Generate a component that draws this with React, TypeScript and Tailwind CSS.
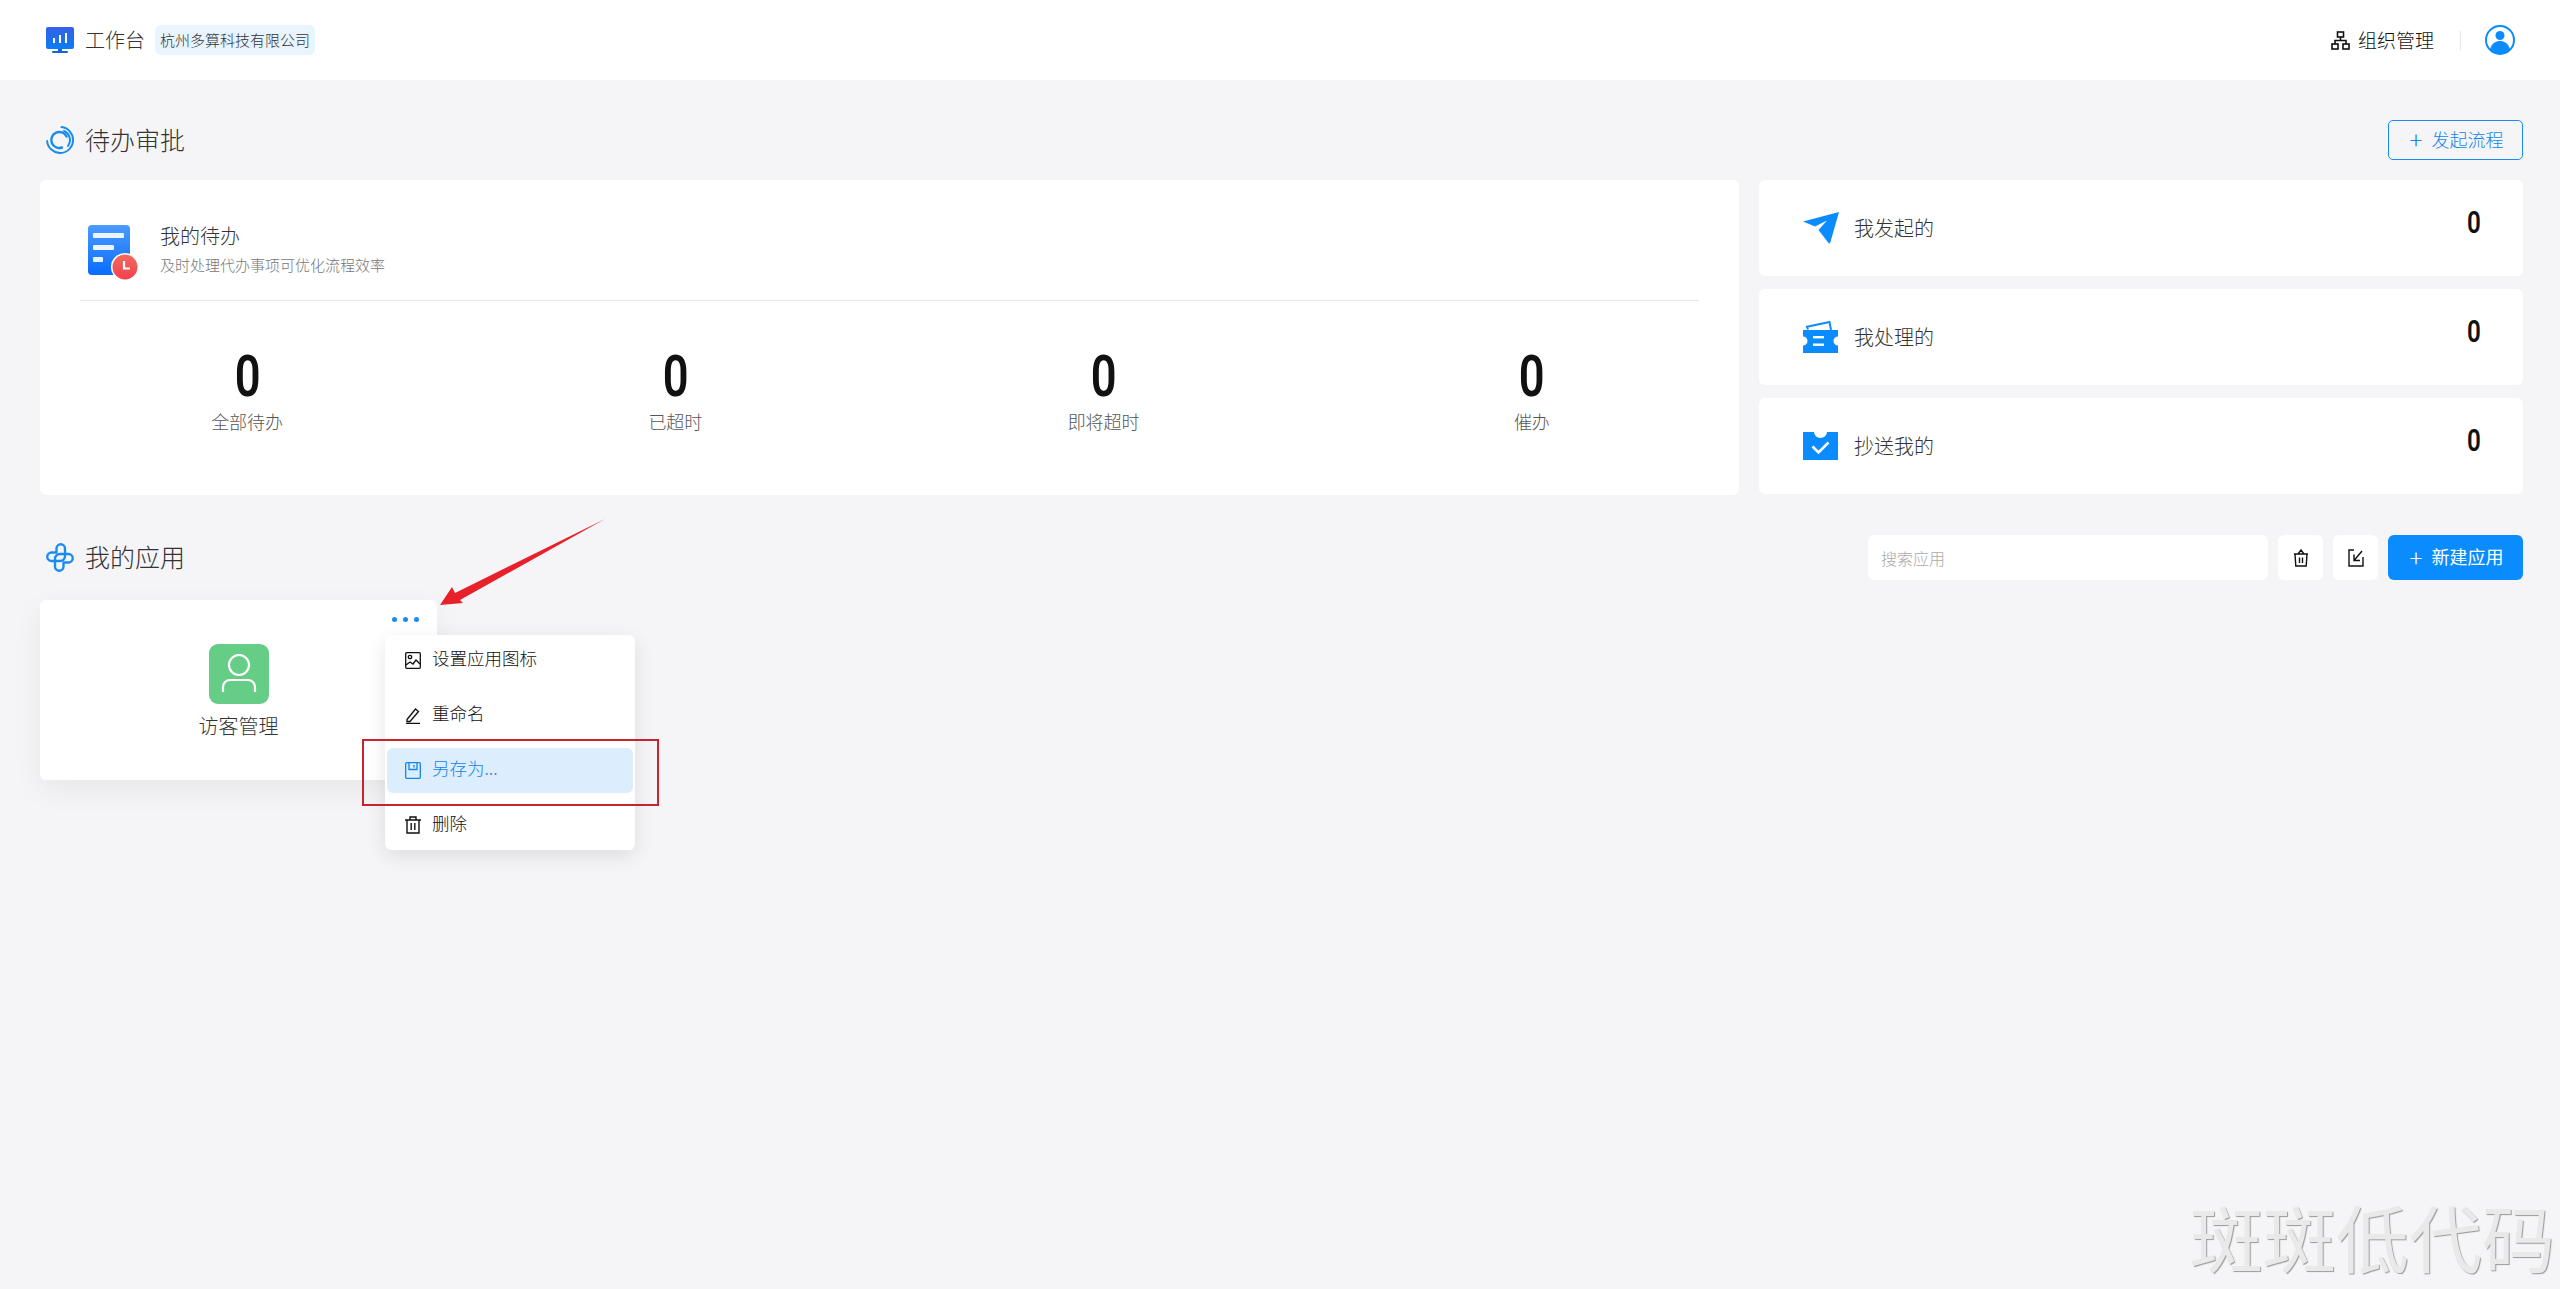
import React from "react";

const CJK = "font-['Noto_Sans_CJK_SC','Microsoft_YaHei',sans-serif]";

function Logo() {
  return (
    <svg width="28" height="26" viewBox="0 0 28 26">
      <defs>
        <linearGradient id="lg" x1="0" y1="0" x2="0" y2="1">
          <stop offset="0" stopColor="#3560e6" />
          <stop offset="1" stopColor="#0b7cf5" />
        </linearGradient>
      </defs>
      <path d="M2 0h24a2 2 0 0 1 2 2v18a2 2 0 0 1-2 2H2a2 2 0 0 1-2-2V2a2 2 0 0 1 2-2z" fill="url(#lg)" />
      <rect x="7" y="11" width="2" height="5" fill="#fff" />
      <rect x="13" y="8" width="2" height="8" fill="#fff" />
      <rect x="19" y="6" width="2" height="10" fill="#fff" />
      <path d="M12 22h4v2h5a1 1 0 0 1 0 2H7a1 1 0 0 1 0-2h5z" fill="#1463d8" />
    </svg>
  );
}

function Spiral() {
  return (
    <svg width="28" height="28" viewBox="0 0 28 28" fill="none" stroke="#1a8cf0" strokeLinecap="round">
      <path d="M15.500 1.100A13 13 0 1 1 1.100 15" strokeWidth="2" />
      <path d="M18 5A10 10 0 0 1 22 20" strokeWidth="2" />
      <path d="M16 21.500A8 8 0 1 1 20.500 10.500" strokeWidth="2.400" />
    </svg>
  );
}

function Clover() {
  return (
    <svg width="28" height="29" viewBox="0 0 28 29" fill="none" stroke="#1a8cf0" strokeWidth="2.400" strokeLinejoin="round">
      <path d="M14 18H5.500a4.200 4.200 0 0 1 0-8.500H10.500V5.500a4.200 4.200 0 0 1 8.500 0V13a5 5 0 0 1-5 5z" />
      <path d="M14 11H22.500a4.200 4.200 0 0 1 0 8.500H17.500V23.500a4.200 4.200 0 0 1-8.500 0V16a5 5 0 0 1 5-5z" />
    </svg>
  );
}

function DocIcon() {
  return (
    <svg width="50" height="55" viewBox="0 0 50 55" className="shrink-0">
      <defs>
        <linearGradient id="dg" x1="0" y1="0" x2="0" y2="1">
          <stop offset="0" stopColor="#4b9bff" />
          <stop offset="1" stopColor="#0a6cff" />
        </linearGradient>
        <linearGradient id="rg" x1="0" y1="0" x2="0" y2="1">
          <stop offset="0" stopColor="#f26a5e" />
          <stop offset="1" stopColor="#f2404c" />
        </linearGradient>
      </defs>
      <rect x="0" y="0" width="42" height="50" rx="4" fill="url(#dg)" />
      <rect x="5" y="8" width="31" height="5" rx="1" fill="#fff" opacity=".9" />
      <rect x="5" y="20" width="21" height="5" rx="1" fill="#fff" opacity=".9" />
      <rect x="5" y="32" width="10" height="5" rx="1" fill="#fff" opacity=".9" />
      <circle cx="37" cy="42" r="14" fill="#fff" />
      <circle cx="37" cy="42" r="12.500" fill="url(#rg)" />
      <path d="M36 36v7.500h6" fill="none" stroke="#fff" strokeWidth="2.200" />
    </svg>
  );
}

function Plane() {
  return (
    <svg width="36" height="32" viewBox="0 0 36 32">
      <path d="M36 0L0 9.500 12 14.500 24 8.500 15.500 18 25.500 31a1 1 0 0 0 1.800-.500z" fill="#0a8cff" />
    </svg>
  );
}

function Ticket() {
  return (
    <svg width="36" height="32" viewBox="0 0 36 32">
      <path d="M0 9h35v6.500a4.500 4.500 0 0 0 0 9V32H0v-7.500a4.500 4.500 0 0 0 0-9z" fill="#0a8cff" />
      <path d="M5 8.500l-1-2.800L26.500 1l1.500 8" fill="none" stroke="#0a8cff" strokeWidth="2" />
      <rect x="10" y="15" width="11" height="2.400" fill="#fff" />
      <rect x="10" y="22.500" width="11" height="2.400" fill="#fff" />
    </svg>
  );
}

function CheckBox() {
  return (
    <svg width="36" height="28" viewBox="0 0 36 28">
      <path d="M0 0h11a6.500 6 0 0 0 13 0h11v28H0z" fill="#0a8cff" />
      <path d="M9.500 14.500l6 6 10-10" fill="none" stroke="#fff" strokeWidth="2.600" />
    </svg>
  );
}

function Stat({ label }: { label: string }) {
  return (
    <div className="flex flex-col items-center">
      <div className="h-[60px] leading-[60px] text-[58px] font-semibold text-[#111] font-['Roboto',sans-serif] scale-x-[0.78]">0</div>
      <div className="mt-[3px] h-[24px] leading-[24px] text-[18px] font-light text-[#555]">{label}</div>
    </div>
  );
}

function SideCard({ icon, label }: { icon: React.ReactNode; label: string }) {
  return (
    <div className="h-[96px] bg-white rounded-[6px] flex items-center pl-[44px] pr-[40px]">
      <div className="w-[36px] flex justify-center">{icon}</div>
      <div className="ml-[15px] flex-1 text-[20px] font-light text-[#333]">{label}</div>
      <div className="self-start mt-[23px] h-[40px] leading-[40px] text-[31px] font-semibold text-[#111] font-['Roboto',sans-serif] scale-x-[0.78]">0</div>
    </div>
  );
}

function MenuItem({ icon, label, active }: { icon: React.ReactNode; label: string; active?: boolean }) {
  return (
    <div className={active ? "h-[45px] mx-[2px] rounded-[6px] bg-[#dceefd] text-[#1384ea] flex items-center pl-[17px]" : "h-[45px] mx-[2px] flex items-center pl-[17px] text-[#111]"}>
      <span className="w-[18px] flex justify-center">{icon}</span>
      <span className="ml-[10px] pb-[3px] text-[17.5px] font-light">{label}</span>
    </div>
  );
}

export default function App() {
  return (
    <div className={`relative min-h-[1289px] bg-[#f5f5f7] overflow-hidden ${CJK}`}>
      <header className="h-20 bg-white flex items-center justify-between pl-[46px] pr-[45px]">
        <div className="flex items-center">
          <Logo />
          <span className="ml-[11px] text-[20px] font-light text-[#333]">工作台</span>
          <span className="ml-[10px] h-[30px] px-[5px] rounded-[6px] bg-[#e8f4ff] text-[15px] leading-[30px] text-[#333] font-light">杭州多算科技有限公司</span>
        </div>
        <div className="flex items-center">
          <svg width="19" height="19" viewBox="0 0 19 19" fill="none" stroke="#111" strokeWidth="1.600">
            <rect x="6.500" y="1" width="6" height="5" />
            <rect x="1" y="13" width="6" height="5" />
            <rect x="12" y="13" width="6" height="5" />
            <path d="M9.500 6v3.500M4 13V9.500h11V13" />
          </svg>
          <span className="ml-[8px] text-[19px] font-light text-[#111]">组织管理</span>
          <span className="ml-[26px] w-px h-[19px] bg-[#e5e7eb]" />
          <svg className="ml-[24px]" width="30" height="30" viewBox="0 0 30 30">
            <circle cx="15" cy="15" r="14" fill="#fff" stroke="#0a8cff" strokeWidth="2" />
            <circle cx="15" cy="10.500" r="4.500" fill="#0a8cff" />
            <path d="M5 24c2-6 6-8 10-8s8 2 10 8c-2.500 3-6 5-10 5s-7.500-2-10-5z" fill="#0a8cff" />
          </svg>
        </div>
      </header>

      <main className="pl-[40px] pr-[37px]">
        <div className="mt-[40px] h-[40px] flex items-center justify-between">
          <div className="flex items-center pl-[6px]">
            <Spiral />
            <span className="ml-[11px] text-[25px] font-light text-[#333]">待办审批</span>
          </div>
          <button className="w-[135px] h-[40px] rounded-[5px] border border-[#1a8cf0] text-[#1384ea] text-[18px] font-light flex items-center justify-center gap-[9px] pl-[2px] pb-[2px]">
            <span className="text-[24px] leading-none font-light">+</span>发起流程
          </button>
        </div>

        <div className="mt-[20px] flex gap-[20px] items-start">
          <section className="flex-1 h-[315px] bg-white rounded-[6px]">
            <div className="mx-[40px] h-[121px] border-b border-[#e5e7eb] pl-[8px] pt-[45px] flex items-start">
              <DocIcon />
              <div className="ml-[22px]">
                <div className="h-[22px] leading-[22px] text-[20px] font-light text-[#333]">我的待办</div>
                <div className="mt-[8px] h-[20px] leading-[20px] text-[15px] font-light text-[#777]">及时处理代办事项可优化流程效率</div>
              </div>
            </div>
            <div className="-mx-[7px] mt-[45px] grid grid-cols-4">
              <Stat label="全部待办" />
              <Stat label="已超时" />
              <Stat label="即将超时" />
              <Stat label="催办" />
            </div>
          </section>
          <div className="w-[764px] flex flex-col gap-[13px]">
            <SideCard icon={<Plane />} label="我发起的" />
            <SideCard icon={<Ticket />} label="我处理的" />
            <SideCard icon={<CheckBox />} label="抄送我的" />
          </div>
        </div>

        <div className="mt-[40px] h-[45px] flex items-center justify-between">
          <div className="flex items-center pl-[6px]">
            <Clover />
            <span className="ml-[11px] pb-[2px] text-[25px] font-light text-[#333]">我的应用</span>
          </div>
          <div className="flex items-center gap-[10px]">
            <input className="w-[400px] h-[45px] rounded-[6px] bg-white pl-[13px] text-[16px] font-light placeholder:text-[#aaa] outline-none" placeholder="搜索应用" />
            <button className="w-[45px] h-[45px] rounded-[6px] bg-white flex items-center justify-center">
              <svg width="16" height="18" viewBox="0 0 16 18" fill="none" stroke="#111" strokeWidth="1.400">
                <path d="M2 5h12l-.8 12H2.800zM1 5h14M5 5l3-4 3 4M6.500 8.500v5.500M9.500 8.500v5.500" />
              </svg>
            </button>
            <button className="w-[45px] h-[45px] rounded-[6px] bg-white flex items-center justify-center">
              <svg width="18" height="18" viewBox="0 0 18 18" fill="none" stroke="#111" strokeWidth="1.400">
                <path d="M7 1H2v16h14V8M15 2L7.500 11M7 5.500V11.500H13" />
              </svg>
            </button>
            <button className="w-[135px] h-[45px] rounded-[6px] bg-[#0a8cff] text-white text-[18px] flex items-center justify-center gap-[9px] pl-[2px] pb-[2px]">
              <span className="text-[24px] leading-none font-light">+</span>新建应用
            </button>
          </div>
        </div>

        <div className="mt-[20px] relative w-[397px] h-[180px] bg-white rounded-[6px] shadow-[0_10px_30px_rgba(0,0,0,0.06)] flex flex-col items-center">
          <div className="absolute right-[18px] top-[17px] flex gap-[6px]">
            <span className="w-[5px] h-[5px] rounded-full bg-[#1a8cf0]" />
            <span className="w-[5px] h-[5px] rounded-full bg-[#1a8cf0]" />
            <span className="w-[5px] h-[5px] rounded-full bg-[#1a8cf0]" />
          </div>
          <div className="mt-[44px] w-[60px] h-[60px] rounded-[9px] bg-[#65cd85] flex items-center justify-center">
            <svg width="36" height="40" viewBox="0 0 36 40" fill="none" stroke="#fff" strokeWidth="2.200">
              <ellipse cx="18" cy="11" rx="10" ry="10" />
              <path d="M2 38v-5a7 7 0 0 1 7-7h18a7 7 0 0 1 7 7v5" />
            </svg>
          </div>
          <div className="mt-[7px] text-[20px] font-light text-[#333]">访客管理</div>

          <div className="absolute left-[345px] top-[35px] w-[250px] py-[2.5px] bg-white rounded-[6px] shadow-[0_6px_20px_rgba(0,0,0,0.1)] flex flex-col gap-[10px]">
            <MenuItem
              label="设置应用图标"
              icon={
                <svg width="16" height="17" viewBox="0 0 16 17" fill="none" stroke="currentColor" strokeWidth="1.300">
                  <rect x=".7" y=".7" width="14.600" height="15.600" rx="1" />
                  <circle cx="5" cy="5" r="1.700" />
                  <path d="M1 13l4-3 3 2 3-4 4 4" />
                </svg>
              }
            />
            <MenuItem
              label="重命名"
              icon={
                <svg width="16" height="17" viewBox="0 0 16 17" fill="none" stroke="currentColor" strokeWidth="1.300">
                  <path d="M2 12.500L10.500 2l3 2.500L5 14.500H2zM1 16.300h14" />
                </svg>
              }
            />
            <MenuItem
              active
              label="另存为..."
              icon={
                <svg width="16" height="17" viewBox="0 0 16 17" fill="none" stroke="currentColor" strokeWidth="1.300">
                  <rect x=".7" y=".7" width="14.600" height="15.600" rx="1" />
                  <path d="M4 1v6.500h8V1M9 3v2.500" />
                </svg>
              }
            />
            <MenuItem
              label="删除"
              icon={
                <svg width="16" height="18" viewBox="0 0 16 18" fill="none" stroke="currentColor" strokeWidth="1.400">
                  <path d="M2 4h12v13H2zM0 4h16M5 4V1h6v3M6.200 7v7M9.800 7v7" />
                </svg>
              }
            />
          </div>
        </div>
      </main>

      <div className="absolute left-[362px] top-[739px] w-[297px] h-[67px] border-2 border-[#c9232d]" />
      <svg className="absolute left-[430px] top-[510px]" width="180" height="105" viewBox="0 0 180 105">
        <path d="M175 9L25 83 22 77 10 95 33 93 30 90z" fill="#e8202a" />
      </svg>
      <div className="absolute left-[2190px] top-[1200px] text-[73px] leading-[84px] font-['Liberation_Sans','Noto_Sans_CJK_SC',sans-serif] text-[#e9e9e9] [text-shadow:1px_1px_1px_#999] whitespace-nowrap">斑斑低代码</div>
    </div>
  );
}
